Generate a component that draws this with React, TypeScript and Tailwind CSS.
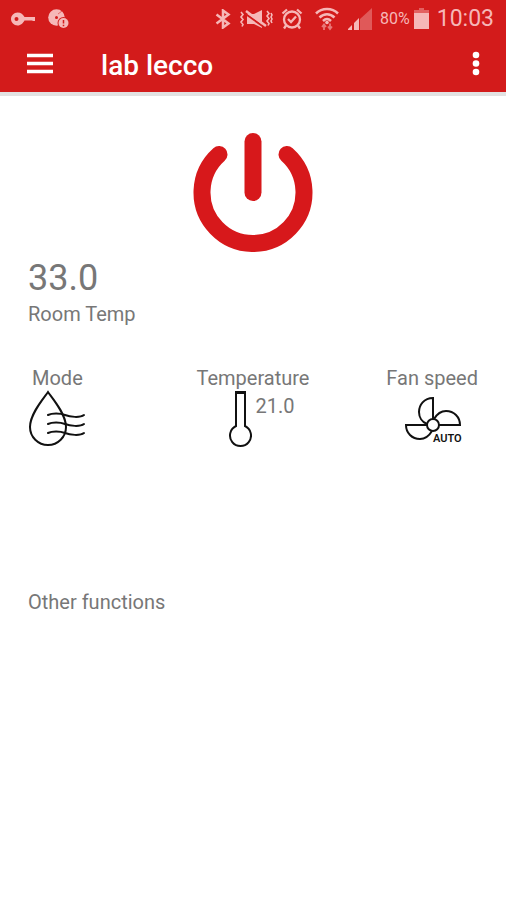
import { useState } from "react";

function StatusBar(){
    return(
        <div className="flex h-9 items-center justify-between pt-px pl-[11px] pr-3 text-[#f6b7b7]">
            <div className="flex items-center gap-3">
                <svg width="25" height="14" viewBox="0 0 25 14" fill="currentColor">
                    <path fillRule="evenodd" d="M6.500 0.500C10 0.500 12 2.500 13.500 5H24v4h-2.500V8.500H13.500C12 11 10 13.500 6.500 13.500 3 13.500 0 10.500 0 7S3 0.500 6.500 0.500ZM5.500 5a2 2 0 1 0 0 4 2 2 0 0 0 0-4Z"/>
                </svg>
                <svg width="22" height="20" viewBox="0 0 22 20" fill="currentColor">
                    <circle cx="8.500" cy="8.500" r="8.300"/>
                    <circle cx="8.500" cy="8.500" r="1.500" fill="#d31b1b"/>
                    <path d="M10 5 14 2" stroke="#d31b1b" opacity=".5"/>
                    <circle cx="15.500" cy="14" r="6" fill="#d31b1b"/>
                    <circle cx="15.500" cy="14" r="5"/>
                    <path d="M15.500 11v3.500M15.500 15.800v1.400" stroke="#d31b1b" strokeWidth="1.500"/>
                </svg>
            </div>
            <div className="flex items-center">
                <svg className="mr-2" width="16" height="20" viewBox="0 0 16 20" fill="none" stroke="currentColor" strokeWidth="2.500">
                    <path d="M1.500 5.500 13.500 14.500 8 18.500V1.500L13.500 5.500 1.500 14.500"/>
                </svg>
                <svg className="mr-2" width="34" height="20" viewBox="0 0 34 20" fill="none" stroke="currentColor" strokeWidth="1.600">
                    <path d="M8 5h7l8-4v18l-8-4H8Z" fill="currentColor" stroke="none"/>
                    <path d="M6 4.500 27 19.500" stroke="#d31b1b" strokeWidth="2"/>
                    <path d="M7 2 27 17" strokeWidth="2.500"/>
                    <path d="M2 3l2 2.500-2 2.500 2 2.500-2 2.500 2 2.500-1 2M28 2l2 2.500-2 2.500 2 2.500-2 2.500 2 2.500-1 2M32 4l1 2-1 2 1 2-1 2 1 2"/>
                </svg>
                <svg className="mr-3" width="22" height="22" viewBox="0 0 22 22" fill="none" stroke="currentColor" strokeWidth="2.300">
                    <circle cx="11" cy="11.500" r="8"/>
                    <path d="M1.500 5.500 6 1.500M16 1.500l4.500 4M5 17.500 3 20.500M17 17.500l2 3M7 11l3 3 5-5.500"/>
                </svg>
                <svg className="mr-2" width="24" height="24" viewBox="0 0 24 24" fill="none" stroke="currentColor" strokeWidth="2.500">
                    <path d="M1 6.500C7 .5 17 .5 23 6.500M4.500 10.500c4.500-4.500 10.500-4.500 15 0M8 14c2.500-2.500 5.500-2.500 8 0"/>
                    <circle cx="12" cy="15.500" r="1.800" fill="currentColor" stroke="none"/>
                    <path d="M9 23v-5M7 20l2-2.500 2 2.500M15 16.500v5M13 19.500l2 2.500 2-2.500" strokeWidth="1.800" opacity=".6"/>
                </svg>
                <svg className="mr-2" width="25" height="24" viewBox="0 0 25 24" fill="currentColor">
                    <path d="M13 12 25 1v22H13Z" opacity=".4"/>
                    <path d="M1 23v-1l4-4v5ZM7 23v-7l5-5v12Z"/>
                </svg>
                <span className="mr-1 text-base">80%</span>
                <svg className="mr-2" width="15" height="21" viewBox="0 0 15 21" fill="currentColor">
                    <path d="M5 0h5v2h5v4H0V2h5Z" opacity=".45"/>
                    <path d="M0 5h15v16H0Z"/>
                </svg>
                <span className="text-[23px]">10:03</span>
            </div>
        </div>
    )
}

function PowerIcon(){
    return(
        <svg width="120" height="120" viewBox="0 0 120 120" fill="none" stroke="#d7181b" strokeWidth="17" strokeLinecap="round">
            <path d="M26 22.500A51 51 0 1 0 94 22.500"/>
            <path d="M60 9.500V60.500"/>
        </svg>
    )
}

function ModeIcon(){
    return(
        <svg width="58" height="58" viewBox="0 0 58 58" fill="none" stroke="#111" strokeWidth="2" strokeLinecap="round">
            <path d="M20 2C15 9 2 24 2 37a18 18 0 0 0 36 0C38 24 25 9 20 2Z"/>
            <path d="M20 25c4-2 12-2 17 0s15 3 19 0M20 34c4-2 12-2 17 0s15 3 19 0M20 43c4-2 12-2 17 0s15 3 19 0"/>
        </svg>
    )
}

function ThermometerIcon(){
    return(
        <svg width="24" height="58" viewBox="0 0 24 58" fill="none" stroke="#111" strokeWidth="2">
            <path d="M8 36V3h9v33A10.500 10.500 0 1 1 8 36Z"/>
            <path d="M7 2.500h11" strokeWidth="3"/>
        </svg>
    )
}

function FanIcon(){
    return(
        <svg width="58" height="50" viewBox="0 0 58 50" fill="none" stroke="#111" strokeWidth="2">
            <circle cx="28" cy="29" r="6"/>
            <path d="M28 23V2C19 2 14 9 14 16c0 5 3 10 8 12M34 29h21c0-8-6-14-14-14-5 0-9 3-12 8M22 29H1c0 8 6 14 14 14 5 0 9-3 12-8"/>
            <text x="28" y="46" fill="#111" stroke="none" fontSize="11" fontWeight="600">AUTO</text>
        </svg>
    )
}

function App(){

    const [powerOn, setPowerOn]=useState<boolean>(true);
    const roomTemp="33.0";
    const targetTemp="21.0";

    return(
        <div className="min-h-screen bg-white font-['Roboto',sans-serif] text-xl leading-6 text-[#777]">
            <header className="border-b-4 border-[#e2e2e2] bg-[#d31b1b]">
                <StatusBar/>
                <div className="flex h-14 items-center pl-[27px] pr-5 text-white">
                    <button type="button" aria-label="Menu">
                        <svg width="26" height="22" viewBox="0 0 26 22" stroke="currentColor" strokeWidth="3.500">
                            <path d="M0 2.500h26M0 10.500h26M0 18.500h26"/>
                        </svg>
                    </button>
                    <h1 className="ml-12 pt-1 text-[28px] font-medium">lab lecco</h1>
                    <button type="button" aria-label="More options" className="ml-auto">
                        <svg width="20" height="26" viewBox="0 0 20 26" fill="currentColor">
                            <circle cx="10" cy="4" r="3.300"/>
                            <circle cx="10" cy="12.500" r="3.300"/>
                            <circle cx="10" cy="21" r="3.300"/>
                        </svg>
                    </button>
                </div>
            </header>

            <main className="px-7 pt-9">
                <div className="flex justify-center">
                    <button type="button" aria-label="Power" aria-pressed={powerOn} onClick={() => setPowerOn(!powerOn)}>
                        <PowerIcon/>
                    </button>
                </div>

                <div className="mt-1.5 text-4xl">{roomTemp}</div>
                <div className="mt-1">Room Temp</div>

                <div className="mt-10 grid grid-cols-3">
                    <button type="button" className="flex flex-col items-start">
                        <span className="ml-1">Mode</span>
                        <ModeIcon/>
                    </button>
                    <button type="button" className="flex flex-col items-center">
                        <span>Temperature</span>
                        <span className="flex items-start gap-1 pl-4">
                            <ThermometerIcon/>
                            <span className="pt-1">{targetTemp}</span>
                        </span>
                    </button>
                    <button type="button" className="flex flex-col items-center justify-self-end">
                        <span>Fan speed</span>
                        <span className="pt-1.5 pl-1"><FanIcon/></span>
                    </button>
                </div>

                <h2 className="mt-[142px]">Other functions</h2>
            </main>
        </div>
    )
}

export default App;
